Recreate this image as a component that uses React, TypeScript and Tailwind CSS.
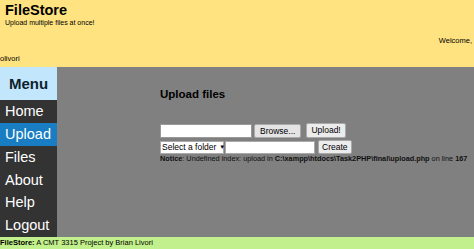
import React from 'react';

export default function App() {
  const items = ['Home', 'Upload', 'Files', 'About', 'Help', 'Logout'];
  return (
    <div className="w-[474px] h-[249px] overflow-hidden flex flex-col font-['Liberation_Sans',Arial,sans-serif] text-black">
      {/* header */}
      <div className="h-[67px] shrink-0 bg-[#ffe380] relative">
        <div className="pl-[5px] pt-[3px] text-[14.5px] font-bold leading-[15px]">FileStore</div>
        <div className="pl-[5px] text-[7px] leading-[9px]">Upload multiple files at once!</div>
        <div className="absolute right-[2px] top-[36px] text-[7.5px] leading-[9px]">Welcome,</div>
        <div className="absolute left-0 top-[54px] text-[7.5px] leading-[9px]">olivori</div>
      </div>

      <div className="flex h-[170px] shrink-0">
        {/* sidebar */}
        <div className="w-[57px] flex flex-col bg-[#333333]">
          <div className="h-[33px] shrink-0 bg-[#c2e6fb] flex items-center justify-center text-[15px] leading-none font-bold text-[#0f1f2e]">Menu</div>
          {items.map((it) => (
            <div
              key={it}
              className={`flex-1 min-h-0 flex items-center pl-[5px] text-[14.5px] leading-none text-white ${it === 'Upload' ? 'bg-[#187dc2]' : ''}`}
            >
              {it}
            </div>
          ))}
        </div>

        {/* main */}
        <div className="flex-1 bg-[#808080] pl-[103px] pt-[20px]">
          <div className="text-[11.5px] font-bold leading-[14px]">Upload files</div>
          <div className="mt-[22px] flex items-center gap-[2px]">
            <div className="w-[92px] h-[14px] bg-white border border-[#999]" />
            <button className="h-[14px] px-[5px] text-[8.5px] leading-[12px] bg-[#e4e4e4] border border-[#aaa] rounded-[2px]">Browse...</button>
            <button className="ml-[3px] h-[15px] px-[4px] text-[8.5px] leading-[13px] bg-[#ececec] border border-[#aaa] rounded-[2px]">Upload!</button>
          </div>
          <div className="mt-[2px] flex items-center gap-[1px]">
            <div className="h-[13px] w-[64px] bg-white border border-[#aaa] flex items-center pl-[1px] text-[8.5px] leading-[11px] whitespace-nowrap">
              Select a folder
              <span className="ml-[3px] text-[6px]">▼</span>
            </div>
            <div className="w-[90px] h-[13px] bg-white border border-[#aaa]" />
            <button className="ml-[2px] h-[14px] px-[3px] text-[8.5px] leading-[12px] bg-[#ececec] border border-[#aaa] rounded-[2px]">Create</button>
          </div>
          <div className="text-[7.3px] leading-[9px] whitespace-nowrap text-[#111]">
            <b>Notice</b>: Undefined index: upload in <b>C:\xampp\htdocs\Task2PHP\final\upload.php</b> on line <b>167</b>
          </div>
        </div>
      </div>

      {/* footer */}
      <div className="h-[12px] bg-[#c2f08c] text-[7.5px] leading-[12px] whitespace-nowrap">
        <b>FileStore:</b> A CMT 3315 Project by Brian Livori
      </div>
    </div>
  );
}
